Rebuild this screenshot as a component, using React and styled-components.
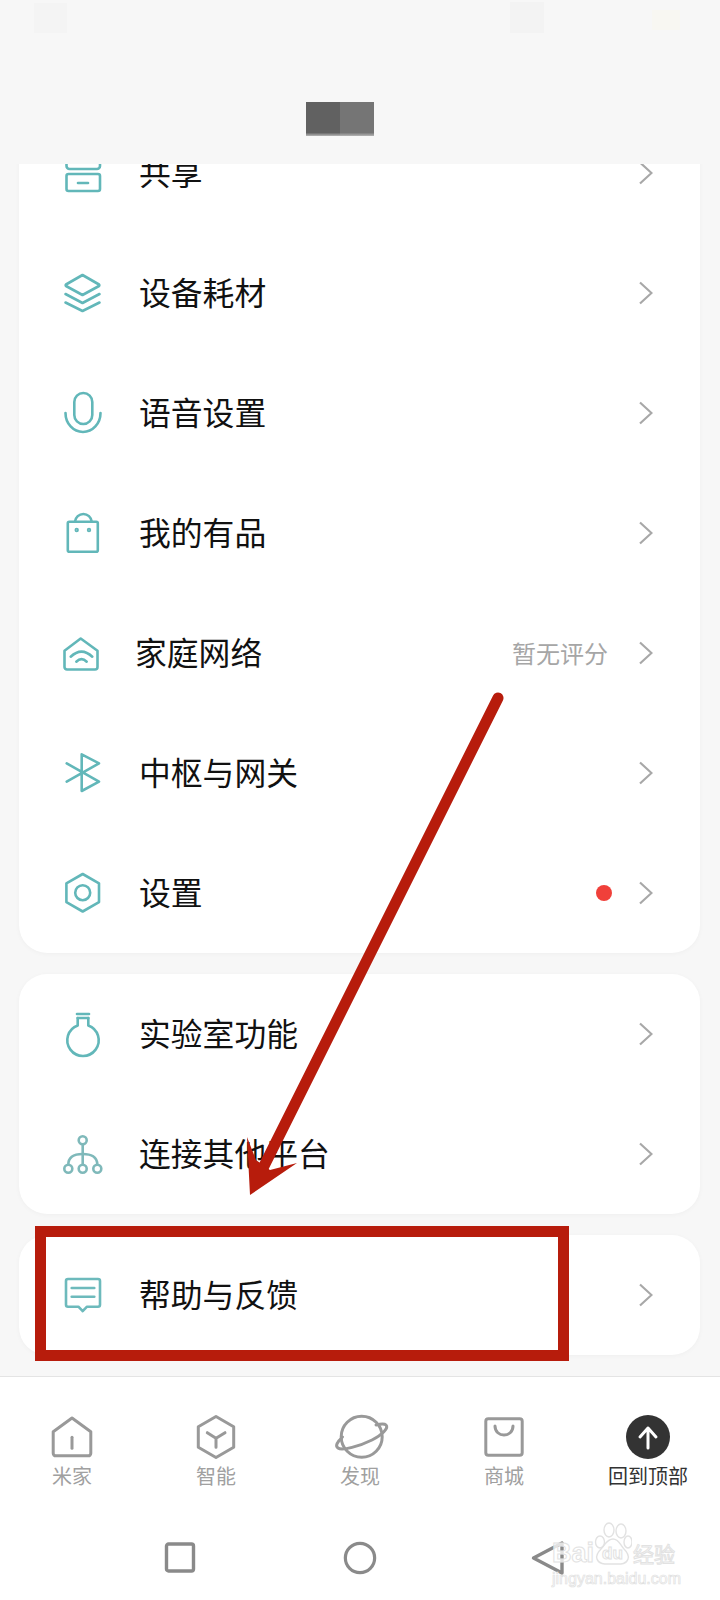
import React from "react";
import styled, { createGlobalStyle } from "styled-components";

const GlobalStyle = createGlobalStyle`
  html, body {
    margin: 0;
    padding: 0;
    background: #f7f7f7;
    font-family: "Noto Sans CJK SC", "Liberation Sans", sans-serif;
  }
`;

const Screen = styled.div`
  position: relative;
  width: 720px;
  height: 1600px;
  overflow: hidden;
  display: flex;
  flex-direction: column;
  background: #f7f7f7;
`;

const Header = styled.header`
  flex: 0 0 164px;
  display: flex;
  flex-direction: column;
`;

const StatusBar = styled.div`
  height: 102px;
  display: flex;
  align-items: flex-start;
  padding-left: 34px;
`;

const StatusPatch = styled.span`
  width: ${(p) => p.$w}px;
  height: ${(p) => p.$h}px;
  margin-top: ${(p) => p.$top}px;
  margin-left: ${(p) => p.$left}px;
  background: ${(p) => p.$color};
`;

const TitleMosaic = styled.div`
  display: flex;
  padding-left: 306px;
`;

const MosaicCell = styled.span`
  width: 34px;
  height: 34px;
  background: linear-gradient(${(p) => p.$tone} 90%, #b5b5b5);
`;

const Scroller = styled.main`
  flex: 1;
  min-height: 0;
  overflow: hidden;
  display: flex;
  flex-direction: column;
  gap: 21px;
  padding: 0 20px 0 19px;
`;

const Card = styled.section`
  flex: none;
  margin-top: ${(p) => p.$offset || 0}px;
  background: #fff;
  border-radius: 28px;
  box-shadow: 0 1px 5px rgba(0, 0, 0, 0.035);
`;

const Row = styled.div`
  height: 120px;
  display: flex;
  align-items: center;
  padding: 0 47px 0 39px;
`;

const RowIcon = styled.svg`
  flex: none;
  width: 48px;
  height: 48px;
  fill: none;
  stroke: ${(p) => p.$stroke || "#62b7b9"};
  stroke-width: 2.6;
  stroke-linecap: round;
  stroke-linejoin: round;
`;

const RowLabel = styled.span`
  margin-left: ${(p) => 33 + (p.$shift || 0)}px;
  margin-bottom: 4px;
  font-size: 31.8px;
  line-height: 44px;
  color: #111;
`;

const RowHint = styled.span`
  margin-left: auto;
  margin-right: 31px;
  font-size: 24px;
  line-height: 32px;
  color: #a6a6a6;
`;

const RedDot = styled.span`
  margin-left: auto;
  margin-right: 27px;
  width: 16px;
  height: 16px;
  border-radius: 50%;
  background: #f0403a;
`;

const Chevron = styled.svg`
  flex: none;
  width: 14px;
  height: 24px;
  margin-left: ${(p) => (p.$pushed ? "0" : "auto")};
  fill: none;
  stroke: #a8a8a8;
  stroke-width: 2.2;
`;

const BottomArea = styled.footer`
  flex: 0 0 224px;
  display: flex;
  flex-direction: column;
  background: #fff;
  border-top: 1px solid #e4e4e4;
  box-sizing: border-box;
`;

const Tabs = styled.nav`
  flex: 0 0 139px;
  display: grid;
  grid-template-columns: repeat(5, 144px);
  padding-top: 36px;
  box-sizing: border-box;
`;

const Tab = styled.div`
  display: flex;
  flex-direction: column;
  align-items: center;
`;

const TabIcon = styled.svg`
  width: 48px;
  height: 48px;
  overflow: visible;
  fill: none;
  stroke: #999;
  stroke-width: 3;
  stroke-linecap: round;
  stroke-linejoin: round;
`;

const TabLabel = styled.span`
  margin-top: 3px;
  margin-bottom: 1px;
  font-size: 20px;
  line-height: 23px;
  color: ${(p) => (p.$active ? "#333" : "#a0a0a0")};
`;

const SystemBar = styled.div`
  flex: 1;
  display: flex;
  align-items: center;
  padding-left: 163px;
`;

const SystemKey = styled.svg`
  flex: none;
  width: 34px;
  height: 36px;
  margin-right: ${(p) => p.$after}px;
  fill: none;
  stroke: #8a8a8a;
  stroke-width: 3.4;
  stroke-linejoin: round;
`;

const Watermark = styled.div`
  position: absolute;
  left: 552px;
  top: 1522px;
  width: 132px;
  display: flex;
  flex-direction: column;
  color: rgba(255, 255, 255, 0.75);
  -webkit-text-stroke: 1px #e2e2e2;
  font-family: "Liberation Sans", Arial, sans-serif;
  pointer-events: none;
`;

const WatermarkBrand = styled.div`
  display: flex;
  align-items: flex-end;
  height: 46px;
  font-size: 27px;
  line-height: 30px;
  font-weight: 700;
`;

const WatermarkCjk = styled.span`
  margin-left: 1px;
  font-family: "Noto Sans CJK SC", sans-serif;
  font-size: 21px;
  font-weight: 400;
`;

const PawMark = styled.span`
  position: relative;
  width: 38px;
  height: 46px;
  flex: none;
`;

const PawText = styled.span`
  position: absolute;
  left: 8px;
  bottom: 4px;
  font-size: 17px;
  line-height: 20px;
  font-weight: 700;
`;

const PawDrawing = styled.svg`
  position: absolute;
  inset: 0;
  fill: none;
  stroke: #e2e2e2;
  stroke-width: 1.4;
`;

const WatermarkDomain = styled.div`
  margin-top: 3px;
  font-size: 16px;
  line-height: 16px;
  -webkit-text-stroke: 0.7px #e0e0e0;
  white-space: nowrap;
`;

const Highlight = styled.div`
  position: absolute;
  left: 35px;
  top: 1226px;
  width: 534px;
  height: 135px;
  box-sizing: border-box;
  border: 11px solid #b71c0c;
  pointer-events: none;
`;

const ArrowLayer = styled.svg`
  position: absolute;
  left: 0;
  top: 0;
  width: 720px;
  height: 1600px;
  pointer-events: none;
`;

const icons = {
  archive: (
    <>
      <path d="M8.500 6v11a3 3 0 0 0 3 3h27.500a3 3 0 0 0 3-3V6" />
      <rect x="8.500" y="25" width="33.500" height="17" rx="2" />
      <path d="M20 34h10" />
    </>
  ),
  layers: (
    <>
      <path d="M24.500 6l16.500 9.500a1 1 0 0 1 0 1.500L24.500 26 8 17a1 1 0 0 1 0-1.500z" />
      <path d="M7.500 25L24.500 34 41.500 25" />
      <path d="M7.500 33.500L24.500 42 41.500 33.500" />
    </>
  ),
  mic: (
    <>
      <rect x="16.300" y="4" width="18" height="31" rx="9" />
      <path d="M7.500 24a17.500 19 0 0 0 35 0" />
    </>
  ),
  bag: (
    <>
      <rect x="9.800" y="12.700" width="30" height="30" rx="1.500" />
      <path d="M17 12.700a8.400 8.700 0 0 1 16.700 0" />
      <circle cx="18.700" cy="21" r="0.9" />
      <circle cx="31" cy="21" r="0.9" />
    </>
  ),
  network: (
    <>
      <path d="M22.700 9.500L6.500 21.700V38a2.500 2.500 0 0 0 2.500 2.500h28a2.500 2.500 0 0 0 2.500-2.500V21.700z" />
      <path d="M12.700 27.700Q23.500 17.500 34.300 27.700" />
      <path d="M18.300 32.700Q23.500 27.700 28.700 32.700" />
    </>
  ),
  bluetooth: <path d="M8.700 14.300L41 32.700 23.700 42V5.300L41 14.300 8.700 32.700" />,
  settings: (
    <>
      <path d="M24.700 5L41 14.300v18.800L24.700 42.500 8.400 33.100V14.300z" />
      <circle cx="24.700" cy="23.700" r="7.500" />
    </>
  ),
  flask: (
    <>
      <path d="M19 4h12" />
      <path d="M19.700 8v7.500a15.700 15.700 0 1 0 10.600 0V8" />
      <path d="M19.700 8h10.600" />
    </>
  ),
  hub: (
    <>
      <circle cx="24.700" cy="10.300" r="4" />
      <circle cx="10.300" cy="38.700" r="4" />
      <circle cx="24.700" cy="38.700" r="4" />
      <circle cx="39.300" cy="38.700" r="4" />
      <path d="M24.700 14.300v20.400" />
      <path d="M10.300 34.700c0-8 6-10.700 14.400-10.700s14.600 2.700 14.600 10.700" />
    </>
  ),
  feedback: (
    <>
      <path d="M10 8h30a2 2 0 0 1 2 2v23.700a2 2 0 0 1-2 2H29l-4.300 4.500-4.300-4.500H10a2 2 0 0 1-2-2V10a2 2 0 0 1 2-2z" />
      <path d="M13.700 17h22.600" />
      <path d="M13.700 25.700h22.600" />
    </>
  ),
};

const groups = [
  {
    offset: -51,
    rows: [
      { icon: "archive", label: "共享" },
      { icon: "layers", label: "设备耗材" },
      { icon: "mic", label: "语音设置" },
      { icon: "bag", label: "我的有品" },
      { icon: "network", label: "家庭网络", shift: -4, hint: "暂无评分" },
      { icon: "bluetooth", label: "中枢与网关" },
      { icon: "settings", label: "设置", dot: true },
    ],
  },
  {
    rows: [
      { icon: "flask", label: "实验室功能" },
      { icon: "hub", label: "连接其他平台", stroke: "#7fb9ba" },
    ],
  },
  {
    rows: [{ icon: "feedback", label: "帮助与反馈", stroke: "#6dbabc" }],
  },
];

const tabs = [
  {
    label: "米家",
    icon: (
      <>
        <path d="M24 5L5.200 18.700V40.300a2.500 2.500 0 0 0 2.500 2.500h32.600a2.500 2.500 0 0 0 2.500-2.500V18.700z" />
        <path d="M24 24.300v11" />
      </>
    ),
  },
  {
    label: "智能",
    icon: (
      <>
        <path d="M24 3.500L41.700 13.700v20.600L24 44.500 6.300 34.300V13.700z" />
        <path d="M15.300 19.700L24 25.300 33 19.700M24 25.300v9" />
      </>
    ),
  },
  {
    label: "发现",
    icon: (
      <>
        <circle cx="25.700" cy="23.700" r="20.500" />
        <path d="M6.500 24C1 29-1 33 2 35c4 3 22-2 34-8 10-5 17-12 14-15-2-2-6-1-10 0" />
      </>
    ),
  },
  {
    label: "商城",
    icon: (
      <>
        <rect x="5.800" y="5.800" width="36.400" height="36.400" rx="2.500" />
        <path d="M15 13c0 12 18 12 18 0" />
      </>
    ),
  },
  {
    label: "回到顶部",
    active: true,
    icon: (
      <>
        <circle cx="24" cy="24" r="22" fill="#333" stroke="none" />
        <path d="M16 24l8-9 8 9M24 15v20" stroke="#fff" />
      </>
    ),
  },
];

const MenuRow = ({ row }) => (
  <Row>
    <RowIcon viewBox="0 0 48 48" $stroke={row.stroke}>
      {icons[row.icon]}
    </RowIcon>
    <RowLabel $shift={row.shift}>{row.label}</RowLabel>
    {row.hint && <RowHint>{row.hint}</RowHint>}
    {row.dot && <RedDot />}
    <Chevron viewBox="0 0 14 24" $pushed={row.hint || row.dot}>
      <path d="M1 1.500L12.500 12 1 22.500" />
    </Chevron>
  </Row>
);

export default function App() {
  return (
    <Screen>
      <GlobalStyle />
      <Header>
        <StatusBar>
          <StatusPatch $w={33} $h={30} $top={3} $left={0} $color="#f4f4f4" />
          <StatusPatch $w={34} $h={31} $top={2} $left={443} $color="#f3f3f3" />
          <StatusPatch $w={28} $h={20} $top={10} $left={108} $color="#f8f7f2" />
        </StatusBar>
        <TitleMosaic>
          <MosaicCell $tone="#616161" />
          <MosaicCell $tone="#757575" />
        </TitleMosaic>
      </Header>

      <Scroller>
        {groups.map((group, index) => (
          <Card key={index} $offset={group.offset}>
            {group.rows.map((row) => (
              <MenuRow key={row.label} row={row} />
            ))}
          </Card>
        ))}
      </Scroller>

      <BottomArea>
        <Tabs>
          {tabs.map((tab) => (
            <Tab key={tab.label}>
              <TabIcon viewBox="0 0 48 48">{tab.icon}</TabIcon>
              <TabLabel $active={tab.active}>{tab.label}</TabLabel>
            </Tab>
          ))}
        </Tabs>
        <SystemBar>
          <SystemKey viewBox="0 0 34 36" $after={146}>
            <rect x="3.500" y="4" width="27" height="27" rx="2" />
          </SystemKey>
          <SystemKey viewBox="0 0 36 36" $after={153}>
            <circle cx="18" cy="18" r="15.500" />
          </SystemKey>
          <SystemKey viewBox="0 0 34 36" $after={0}>
            <path d="M3.500 18L32 3V33z" />
          </SystemKey>
        </SystemBar>
      </BottomArea>

      <Highlight />
      <ArrowLayer viewBox="0 0 720 1600">
        <line x1="498" y1="698" x2="262" y2="1170" stroke="#b71c0c" strokeWidth="11" strokeLinecap="round" />
        <polygon points="250,1195 247,1137 256,1160 270,1170 297,1163" fill="#b71c0c" />
      </ArrowLayer>

      <Watermark>
        <WatermarkBrand>
          Bai
          <PawMark>
            <PawDrawing viewBox="0 0 38 46">
              <ellipse cx="15" cy="8" rx="5" ry="7" />
              <ellipse cx="27" cy="9" rx="5" ry="7" />
              <ellipse cx="6" cy="20" rx="4.500" ry="6" />
              <ellipse cx="34" cy="20" rx="4" ry="6" />
              <path d="M19 17c-6 0-8 6-12 10-4 4-5 7-4 10 2 6 9 5 16 5s13 1 15-5c1-3 0-6-4-10-4-4-5-10-11-10z" />
            </PawDrawing>
            <PawText>du</PawText>
          </PawMark>
          <WatermarkCjk>经验</WatermarkCjk>
        </WatermarkBrand>
        <WatermarkDomain>jingyan.baidu.com</WatermarkDomain>
      </Watermark>
    </Screen>
  );
}
